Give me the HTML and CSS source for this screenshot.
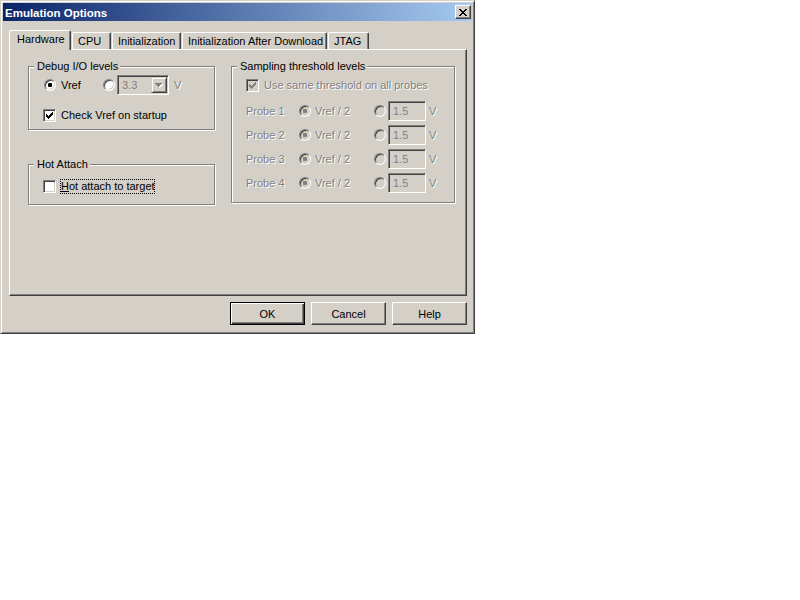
FILE: index.html
```html
<!DOCTYPE html>
<html lang="en">
<head>
    <meta charset="UTF-8">
    <title>Emulation Options</title>
    <link rel="stylesheet" href="styles.css">
</head>
<body>
    <div class="window">
        <div class="titlebar">
            <span class="title">Emulation Options</span>
            <span class="close-btn">
                <svg width="8" height="7" viewBox="0 0 8 7"><path fill="#000" d="M0 0h2v1H0zM6 0h2v1H6zM1 1h2v1H1zM5 1h2v1H5zM2 2h4v1H2zM3 3h2v1H3zM2 4h4v1H2zM1 5h2v1H1zM5 5h2v1H5zM0 6h2v1H0zM6 6h2v1H6z"/></svg>
            </span>
        </div>

        <div class="dialog-body">
            <div class="tabs">
                <div class="tab tab-hardware selected">Hardware</div>
                <div class="tab tab-cpu">CPU</div>
                <div class="tab tab-init">Initialization</div>
                <div class="tab tab-after">Initialization After Download</div>
                <div class="tab tab-jtag">JTAG</div>
            </div>

            <div class="tab-panel">
                <div class="left-col">
                    <div class="group group-debug">
                        <div class="group-title">Debug I/O levels</div>
                        <div class="row">
                            <span class="radio checked"></span>
                            <span class="label label-vref">Vref</span>
                            <span class="radio"></span>
                            <div class="combo">
                                <span class="combo-value">3.3</span>
                                <span class="combo-btn">
                                    <svg width="8" height="5" viewBox="0 0 8 5"><path fill="#fff" d="M1 1h7v1H1zM2 2h5v1H2zM3 3h3v1H3zM4 4h1v1H4z"/><path fill="#808080" d="M0 0h7v1H0zM1 1h5v1H1zM2 2h3v1H2zM3 3h1v1H3z"/></svg>
                                </span>
                            </div>
                            <span class="label disabled unit">V</span>
                        </div>
                        <div class="row row-check">
                            <span class="checkbox">
                                <svg width="7" height="7" viewBox="0 0 7 7"><path fill="#000" d="M0 2h1v3H0zM1 3h1v3H1zM2 4h1v3H2zM3 3h1v3H3zM4 2h1v3H4zM5 1h1v3H5zM6 0h1v3H6z"/></svg>
                            </span>
                            <span class="label">Check Vref on startup</span>
                        </div>
                    </div>

                    <div class="group group-hot">
                        <div class="group-title">Hot Attach</div>
                        <div class="row">
                            <span class="checkbox"></span>
                            <span class="label focus-label"><u>H</u>ot attach to target</span>
                        </div>
                    </div>
                </div>

                <div class="group group-sampling">
                    <div class="group-title">Sampling threshold levels</div>
                    <div class="row">
                        <span class="checkbox disabled">
                            <svg width="7" height="7" viewBox="0 0 7 7"><path fill="#808080" d="M0 2h1v3H0zM1 3h1v3H1zM2 4h1v3H2zM3 3h1v3H3zM4 2h1v3H4zM5 1h1v3H5zM6 0h1v3H6z"/></svg>
                        </span>
                        <span class="label disabled">Use same threshold on all probes</span>
                    </div>
                    <div class="row probe-row">
                        <span class="label disabled probe-name">Probe 1</span>
                        <span class="radio disabled checked"></span>
                        <span class="label disabled probe-vref">Vref / 2</span>
                        <span class="radio disabled"></span>
                        <span class="edit">1.5</span>
                        <span class="label disabled unit-probe">V</span>
                    </div>
                    <div class="row probe-row">
                        <span class="label disabled probe-name">Probe 2</span>
                        <span class="radio disabled checked"></span>
                        <span class="label disabled probe-vref">Vref / 2</span>
                        <span class="radio disabled"></span>
                        <span class="edit">1.5</span>
                        <span class="label disabled unit-probe">V</span>
                    </div>
                    <div class="row probe-row">
                        <span class="label disabled probe-name">Probe 3</span>
                        <span class="radio disabled checked"></span>
                        <span class="label disabled probe-vref">Vref / 2</span>
                        <span class="radio disabled"></span>
                        <span class="edit">1.5</span>
                        <span class="label disabled unit-probe">V</span>
                    </div>
                    <div class="row probe-row">
                        <span class="label disabled probe-name">Probe 4</span>
                        <span class="radio disabled checked"></span>
                        <span class="label disabled probe-vref">Vref / 2</span>
                        <span class="radio disabled"></span>
                        <span class="edit">1.5</span>
                        <span class="label disabled unit-probe">V</span>
                    </div>
                </div>
            </div>

            <div class="buttons">
                <div class="btn btn-default">OK</div>
                <div class="btn">Cancel</div>
                <div class="btn">Help</div>
            </div>
        </div>
    </div>
</body>
</html>
```

FILE: styles.css
```css
body {
    margin: 0;
    background: #fff;
    font-family: "Liberation Sans", Arial, sans-serif;
    font-size: 11px;
    color: #000;
}

/* window frame */
.window {
    box-sizing: border-box;
    width: 475px;
    height: 334px;
    padding: 2px;
    background: #d4d0c8;
    border: 1px solid;
    border-color: #d4d0c8 #404040 #404040 #d4d0c8;
    box-shadow: inset 1px 1px 0 #fff, inset -1px -1px 0 #808080;
}

.titlebar {
    height: 18px;
    display: flex;
    align-items: center;
    justify-content: space-between;
    padding: 0 1px 0 2px;
    background: linear-gradient(to right, #0a246a, #a6caf0);
}

.title {
    color: #fff;
    font-weight: bold;
    font-size: 11.5px;
    line-height: 18px;
    padding-top: 1px;
}

.close-btn {
    box-sizing: border-box;
    width: 16px;
    height: 14px;
    display: flex;
    align-items: center;
    justify-content: center;
    background: #d4d0c8;
    border: 1px solid;
    border-color: #fff #404040 #404040 #fff;
    box-shadow: inset -1px -1px 0 #808080;
}

.dialog-body {
    padding: 9px 0 0 6px;
}

/* tabs */
.tabs {
    display: flex;
    align-items: flex-end;
    height: 19px;
}

.tab {
    box-sizing: border-box;
    height: 17px;
    padding: 2px 0 0 5px;
    line-height: 13px;
    white-space: nowrap;
    border: 1px solid;
    border-bottom: none;
    border-color: #fff #404040 #fff #fff;
    border-radius: 2px 2px 0 0;
    box-shadow: inset -1px 0 0 #808080;
}

.tab + .tab {
    margin-left: 1px;
}

.tab.selected {
    position: relative;
    height: 20px;
    margin-bottom: -1px;
    padding-left: 7px;
    background: #d4d0c8;
}

.tab-hardware { width: 62px; }
.tab-cpu { width: 39px; }
.tab-init { width: 69px; }
.tab-after { width: 145px; }
.tab-jtag { width: 41px; }

.tab-panel {
    box-sizing: border-box;
    width: 458px;
    height: 247px;
    padding: 16px 0 0 18px;
    display: flex;
    align-items: flex-start;
    gap: 16px;
    border: 1px solid;
    border-color: #fff #404040 #404040 #fff;
    box-shadow: inset -1px -1px 0 #808080;
}

.left-col {
    display: flex;
    flex-direction: column;
}

/* group boxes */
.group {
    box-sizing: border-box;
    display: flex;
    flex-direction: column;
    align-items: flex-start;
    padding-left: 14px;
    border: 1px solid #808080;
    box-shadow: 1px 1px 0 #fff, inset 1px 1px 0 #fff;
}

.group-title {
    margin: -7px 0 2px -9px;
    padding: 0 2px 0 3px;
    line-height: 13px;
    background: #d4d0c8;
}

.group-debug {
    width: 187px;
    height: 64px;
}

.group-hot {
    width: 187px;
    height: 41px;
    margin-top: 34px;
}

.group-hot .row {
    margin-top: 3px;
}

.group-sampling {
    width: 224px;
    height: 137px;
}

.row {
    display: flex;
    align-items: center;
    height: 20px;
}

.row-check {
    margin-top: 10px;
}

.probe-row {
    margin-top: 4px;
}

.probe-row:nth-child(3) {
    margin-top: 6px;
}

.label {
    line-height: 13px;
    white-space: nowrap;
}

.disabled {
    color: #808080;
    text-shadow: 1px 1px 0 #fff;
}

.checkbox + .label {
    margin-left: 5px;
}

.label-vref {
    width: 42px;
    margin-left: 5px;
}

.unit {
    margin-left: 5px;
}

.probe-name {
    width: 53px;
}

.probe-vref {
    width: 59px;
    margin-left: 4px;
}

.unit-probe {
    margin-left: 3px;
}

.checkbox + .focus-label {
    box-sizing: border-box;
    width: 95px;
    height: 15px;
    margin-left: 4px;
    overflow: hidden;
    border: 1px dotted #000;
}

/* controls */
.radio {
    box-sizing: border-box;
    width: 12px;
    height: 12px;
    flex: none;
    display: flex;
    align-items: center;
    justify-content: center;
    border-radius: 50%;
    background: #fff;
    border: 1px solid;
    border-color: #808080 #fff #fff #808080;
    box-shadow: inset 1px 1px 0 #404040, inset -1px -1px 0 #d4d0c8;
}

.row > .radio:first-child {
    margin-left: 1px;
}

.radio.checked::after {
    content: "";
    width: 4px;
    height: 4px;
    border-radius: 1px;
    background: #000;
}

.radio.disabled {
    background: #d4d0c8;
    text-shadow: none;
}

.radio.disabled.checked::after {
    background: #808080;
}

.checkbox {
    box-sizing: border-box;
    width: 13px;
    height: 13px;
    flex: none;
    display: flex;
    align-items: center;
    justify-content: center;
    background: #fff;
    border: 1px solid;
    border-color: #808080 #fff #fff #808080;
    box-shadow: inset 1px 1px 0 #404040, inset -1px -1px 0 #d4d0c8;
}

.checkbox.disabled {
    background: #d4d0c8;
}

.combo,
.edit {
    box-sizing: border-box;
    height: 20px;
    display: flex;
    align-items: center;
    color: #808080;
    background: #d4d0c8;
    border: 1px solid;
    border-color: #808080 #fff #fff #808080;
    box-shadow: inset 1px 1px 0 #404040, inset -1px -1px 0 #d4d0c8;
}

.combo {
    width: 52px;
    margin-left: 2px;
    padding: 1px;
    justify-content: space-between;
}

.combo-value {
    padding-left: 3px;
}

.combo-btn {
    box-sizing: border-box;
    width: 16px;
    height: 16px;
    display: flex;
    align-items: center;
    justify-content: center;
    border: 1px solid;
    border-color: #d4d0c8 #404040 #404040 #d4d0c8;
    box-shadow: inset 1px 1px 0 #fff, inset -1px -1px 0 #808080;
}

.edit {
    width: 38px;
    margin-left: 2px;
    padding-left: 4px;
}

/* buttons */
.buttons {
    width: 458px;
    display: flex;
    justify-content: flex-end;
    gap: 6px;
    margin-top: 6px;
}

.btn {
    box-sizing: border-box;
    width: 75px;
    height: 23px;
    display: flex;
    align-items: center;
    justify-content: center;
    border: 1px solid;
    border-color: #fff #404040 #404040 #fff;
    box-shadow: inset -1px -1px 0 #808080;
}

.btn-default {
    border-color: #000;
    box-shadow: inset 1px 1px 0 #fff, inset -1px -1px 0 #404040, inset -2px -2px 0 #808080;
}
```
